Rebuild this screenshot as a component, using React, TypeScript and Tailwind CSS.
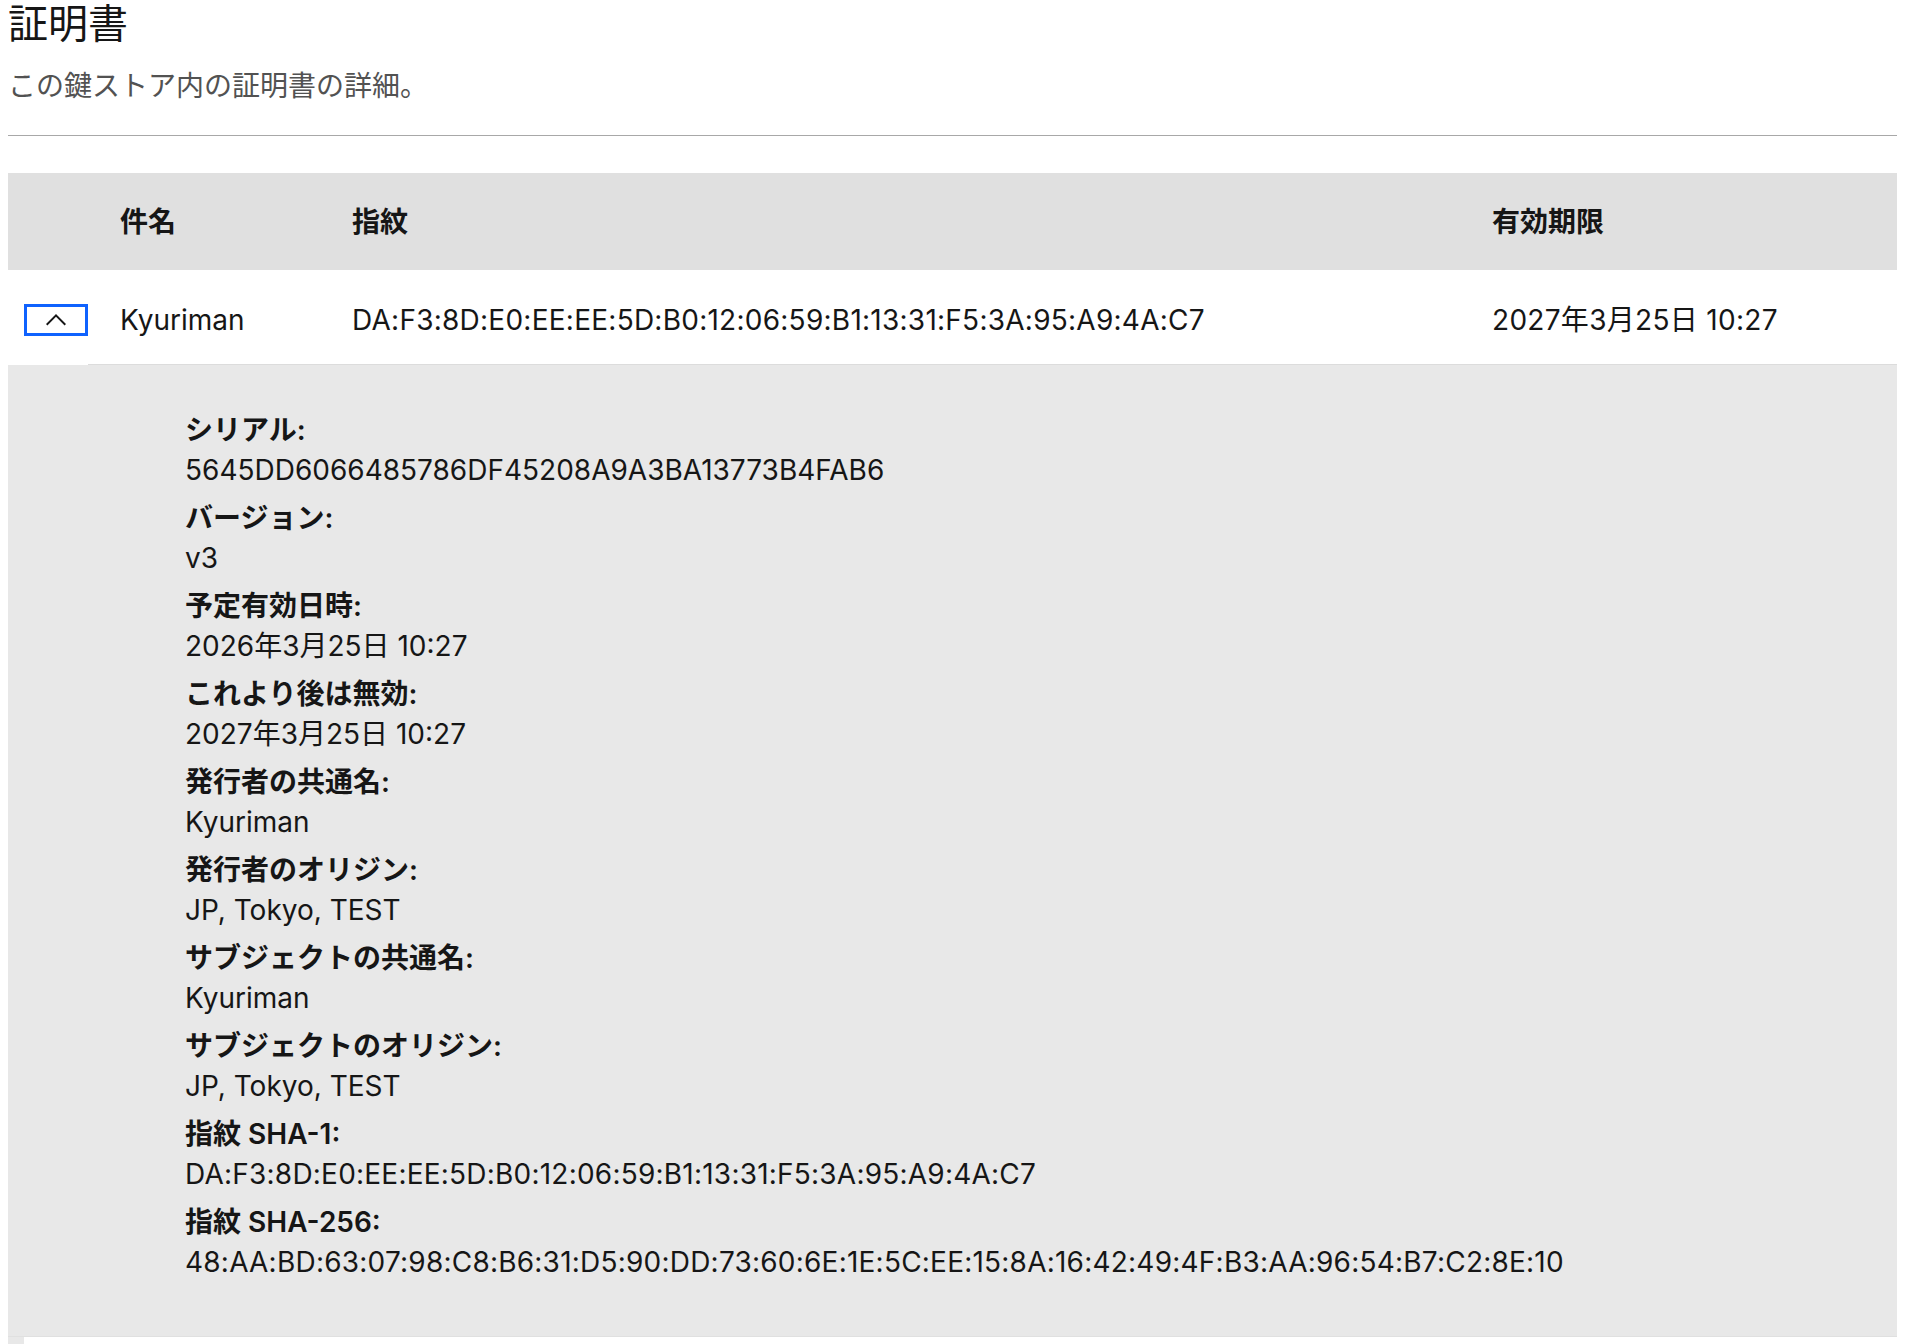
import React from "react";

const FONT = { fontFamily: 'Inter, "Noto Sans CJK JP", sans-serif' };

const details: [string, string, boolean][] = [
  ["シリアル:", "5645DD6066485786DF45208A9A3BA13773B4FAB6", false],
  ["バージョン:", "v3", false],
  ["予定有効日時:", "2026年3月25日 10:27", false],
  ["これより後は無効:", "2027年3月25日 10:27", false],
  ["発行者の共通名:", "Kyuriman", false],
  ["発行者のオリジン:", "JP, Tokyo, TEST", false],
  ["サブジェクトの共通名:", "Kyuriman", false],
  ["サブジェクトのオリジン:", "JP, Tokyo, TEST", false],
  ["指紋 SHA-1:", "DA:F3:8D:E0:EE:EE:5D:B0:12:06:59:B1:13:31:F5:3A:95:A9:4A:C7", true],
  ["指紋 SHA-256:", "48:AA:BD:63:07:98:C8:B6:31:D5:90:DD:73:60:6E:1E:5C:EE:15:8A:16:42:49:4F:B3:AA:96:54:B7:C2:8E:10", true],
];

export default function App() {
  return (
    <div className="min-h-screen bg-white pl-[8px] pr-[13px] text-[#161616]" style={FONT}>
      <h1 className="h-[48px] overflow-hidden text-[40px] leading-[48px] font-normal">証明書</h1>
      <p className="mt-[18px] h-[40px] overflow-hidden text-[28px] leading-[40px] text-[#525252]">この鍵ストア内の証明書の詳細。</p>
      <div className="mt-[29px] h-px bg-[#a8a8a8]" />

      <div className="mt-[37px]">
        {/* header */}
        <div className="flex h-[97px] items-center bg-[#e0e0e0] text-[28px] font-semibold">
          <div className="w-[112px] shrink-0" />
          <div className="w-[232px] shrink-0">件名</div>
          <div className="w-[1140px] shrink-0">指紋</div>
          <div className="flex-1">有効期限</div>
        </div>

        {/* row */}
        <div className="flex h-[95px]">
          <div className="flex w-[80px] shrink-0 items-center pt-[5px] pl-[16px]">
            <button className="flex h-[32px] w-[64px] items-center justify-center border-[3px] border-[#0f62fe] bg-white">
              <svg width="32" height="32" viewBox="0 0 16 16" fill="#161616">
                <path d="M8 5L13 10 12.3 10.7 8 6.4 3.7 10.7 3 10z" />
              </svg>
            </button>
          </div>
          <div className="flex flex-1 items-center border-b border-[#dcdcdc] pt-[5px] text-[28px]">
            <div className="w-[32px] shrink-0" />
            <div className="w-[232px] shrink-0">Kyuriman</div>
            <div className="w-[1140px] shrink-0 tracking-[0.25px]">DA:F3:8D:E0:EE:EE:5D:B0:12:06:59:B1:13:31:F5:3A:95:A9:4A:C7</div>
            <div className="flex-1 tracking-[0.3px]">2027年3月25日 10:27</div>
          </div>
        </div>

        {/* expanded */}
        <div className="border-b border-[#e0e0e0] bg-[#e8e8e8] pl-[177px] pt-[45px] pb-[54px] text-[28px]">
          <div className="flex flex-col gap-[8px]">
            {details.map(([label, value, hex]) => (
              <div key={label} className="flex flex-col">
                <div className="h-[40px] leading-[40px] font-semibold">{label}</div>
                <div className={hex ? "h-[40px] leading-[40px] tracking-[0.22px]" : "h-[40px] leading-[40px]"}>{value}</div>
              </div>
            ))}
          </div>
        </div>
        <div className="flex">
          <div className="h-[12px] w-[16px] bg-[#e8e8e8]" />
        </div>
      </div>
    </div>
  );
}
